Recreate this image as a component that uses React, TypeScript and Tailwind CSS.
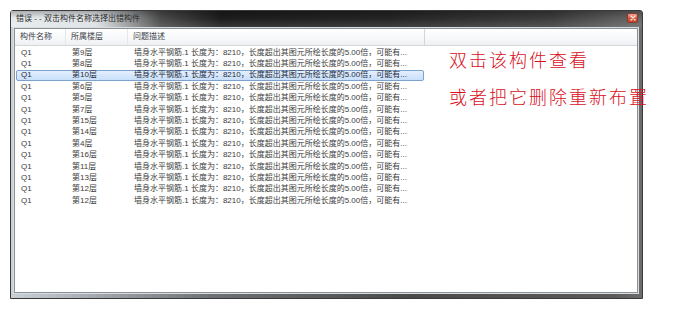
const FLOORS = [
  "第9层",
  "第8层",
  "第10层",
  "第6层",
  "第5层",
  "第7层",
  "第15层",
  "第14层",
  "第4层",
  "第16层",
  "第11层",
  "第13层",
  "第12层",
  "第12层",
];

const DESC = "墙身水平钢筋.1 长度为：8210，长度超出其图元所绘长度的5.00倍，可能有...";

const FONT = { fontFamily: '"Liberation Sans", "Noto Sans CJK SC", sans-serif' };

export default function App() {
  return (
    <div className="relative w-[680px] h-[318px] bg-white overflow-hidden pl-[10px] pt-[10px]" style={FONT}>
      {/* window */}
      <div className="w-[633px] h-[289px] flex flex-col rounded-t-[3px] border border-[#3a3a3a] bg-[linear-gradient(to_right,#c9d0d6_0px,#b8bec4_40px,#6e7174_200px,#4a4a4a_400px,#5a5a5a_600px,#6e6e6e_633px)]">
        {/* title bar */}
        <div className="relative h-[16px] flex items-center bg-[linear-gradient(to_right,#e6eaec_0px,#dde1e4_85px,#9a9c9e_115px,#4a4a4a_150px,#1c1c1c_210px,#242424_380px,#3c3c3c_540px,#686868_633px)]">
          <div className="absolute inset-0 bg-[linear-gradient(to_bottom,rgba(0,0,0,0.25),rgba(0,0,0,0)_45%,rgba(255,255,255,0.12))]" />
          <span className="relative pl-[5px] text-[8px] leading-none text-[#2a2a2a]">错误 - - 双击构件名称选择出错构件</span>
          <div className="absolute right-[4px] top-[2px] w-[11px] h-[10px] rounded-[2px] border border-[#8a3a2a] bg-[linear-gradient(to_bottom,#f0a08c,#d8583e_55%,#c8442c)] flex items-center justify-center">
            <svg width="6" height="6" viewBox="0 0 6 6">
              <path d="M1 1 L5 5 M5 1 L1 5" stroke="#fbe6e0" strokeWidth="1.3" strokeLinecap="round" />
            </svg>
          </div>
        </div>

        {/* body frame */}
        <div className="flex-1 flex pl-[3px] pr-[4px] pb-[5px] pt-[1px]">
          <div className="flex-1 flex flex-col bg-white border border-[#8c9196] shadow-[0_0_0_1px_#d8dde2]">
            {/* header */}
            <div className="flex h-[17px] border-b border-[#d5d7da] bg-[linear-gradient(to_bottom,#ffffff,#f7f8fa_60%,#eef0f3)] text-[8px] text-[#3a3f46]">
              <div className="w-[51px] flex items-center pl-[5px] border-r border-[#e4e6e9]">构件名称</div>
              <div className="w-[62px] flex items-center pl-[5px] border-r border-[#e4e6e9]">所属楼层</div>
              <div className="w-[297px] flex items-center pl-[5px] border-r border-[#d2d6db]">问题描述</div>
              <div className="flex-1" />
            </div>

            {/* rows */}
            <div className="flex flex-col pt-[1px]">
              {FLOORS.map((floor, i) => {
                const selected = i === 2;
                return (
                  <div
                    key={i}
                    className={
                      selected
                        ? "flex w-[408px] ml-[1px] h-[11.4px] items-center text-[8px] text-[#1e2a3a] rounded-[2px] border border-[#7da2ce] bg-[linear-gradient(to_bottom,#e4effd,#c8dffb)]"
                        : "flex w-[408px] ml-[1px] h-[11.4px] items-center text-[8px] text-[#3c3c3c] border border-transparent"
                    }
                  >
                    <div className="w-[50px] pl-[4px] whitespace-nowrap">Q1</div>
                    <div className="w-[62px] pl-[5px] whitespace-nowrap">{floor}</div>
                    <div className="flex-1 pl-[5px] whitespace-nowrap overflow-hidden">{DESC}</div>
                  </div>
                );
              })}
            </div>
          </div>
        </div>
      </div>

      {/* annotation over the screenshot */}
      <div
        className="absolute left-[449px] top-[50px] flex flex-col gap-[19px] text-[18px] leading-[18px] tracking-[2px] text-[#d8101c] whitespace-nowrap"
        style={{ fontFamily: '"Noto Sans CJK SC", sans-serif', fontWeight: 300 }}
      >
        <span>双击该构件查看</span>
        <span>或者把它删除重新布置</span>
      </div>
    </div>
  );
}
